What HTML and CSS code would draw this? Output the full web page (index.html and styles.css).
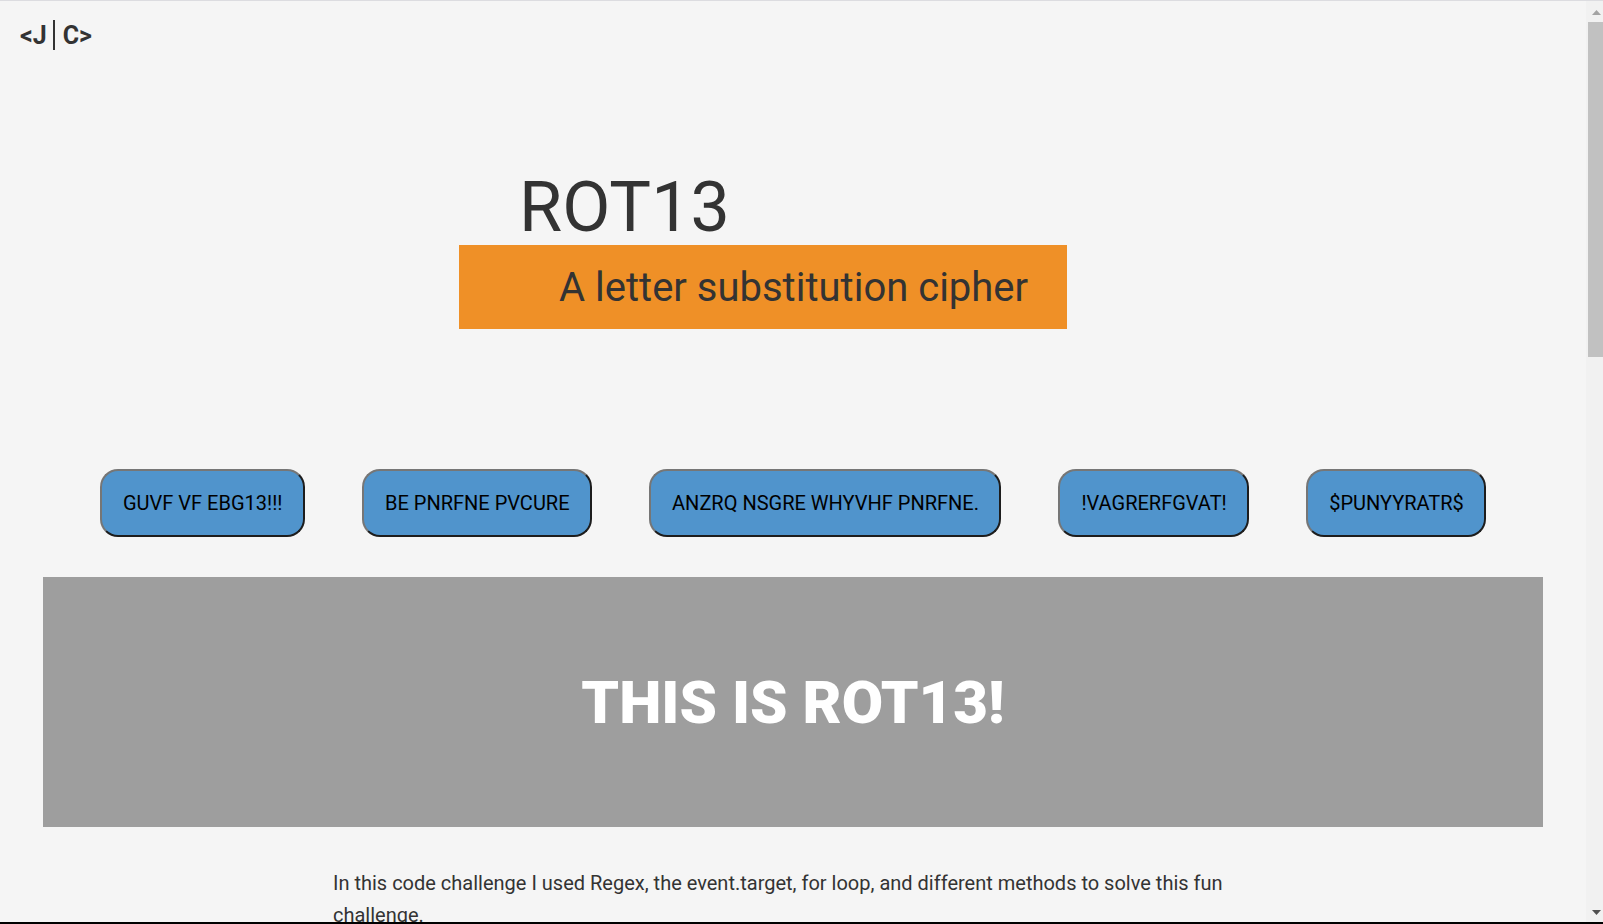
FILE: index.html
```html
<!DOCTYPE html>
<html lang="en">
<head>
    <meta charset="UTF-8">
    <meta name="viewport" content="width=device-width, initial-scale=1.0">
    <title>ROT13</title>
    <link rel="stylesheet" href="styles.css">
</head>
<body>
    <div class="window">
        <div class="page">
            <nav class="logo">
                <span>&lt;J</span>
                <span class="logo-bar"></span>
                <span>C&gt;</span>
            </nav>
            <header class="hero">
                <h1>ROT13</h1>
                <h2>A letter substitution cipher</h2>
            </header>
            <div class="buttons">
                <button>GUVF VF EBG13!!!</button>
                <button>BE PNRFNE PVCURE</button>
                <button>ANZRQ NSGRE WHYVHF PNRFNE.</button>
                <button>!VAGRERFGVAT!</button>
                <button>$PUNYYRATR$</button>
            </div>
            <div class="output">THIS IS ROT13!</div>
            <p class="about">In this code challenge I used Regex, the event.target, for loop, and different methods to solve this fun challenge.</p>
        </div>
        <div class="scrollbar">
            <svg class="arrow" width="17" height="17" viewBox="0 0 17 17"><path d="M6 14h9l-4.500-5z" fill="#a3a3a3"/></svg>
            <div class="track"><div class="thumb"></div></div>
            <svg class="arrow" width="17" height="17" viewBox="0 0 17 17"><path d="M6 5h9l-4.500 5z" fill="#505050"/></svg>
        </div>
    </div>
</body>
</html>
```

FILE: styles.css
```css
* {
    box-sizing: border-box;
}

body {
    margin: 0;
    height: 924px;
    overflow: hidden;
    background-color: #f5f5f5;
    color: #333;
    font-family: Roboto, sans-serif;
}

.window {
    display: flex;
    height: 924px;
    border-top: 1px solid #dcdce0;
    border-bottom: 2px solid #000;
}

.page {
    flex: 1;
    min-width: 0;
    overflow: hidden;
}

.logo {
    display: flex;
    align-items: center;
    height: 30px;
    margin: 19px 0 0 20px;
    font-size: 25px;
    font-weight: 700;
}

.logo-bar {
    width: 2px;
    height: 30px;
    margin: 0 8px 0 6px;
    background-color: #333;
}

.hero {
    margin: 116px 0 0 459px;
}

h1 {
    height: 79px;
    margin: 0 0 0 60px;
    font-size: 70px;
    font-weight: 400;
    line-height: 82px;
}

h2 {
    width: 608px;
    height: 84px;
    margin: 0;
    padding: 2px 0 0 100px;
    background-color: #ef9027;
    font-size: 40px;
    font-weight: 400;
    line-height: 82px;
}

.buttons {
    display: flex;
    gap: 57px;
    margin: 140px 0 0 100px;
}

button {
    height: 68px;
    padding: 0 20.500px 0 21px;
    border: 2px solid;
    border-color: #767676 #1d1d1d #1d1d1d #767676;
    border-radius: 18px;
    background-color: #5094cc;
    color: #000;
    font-family: Roboto, sans-serif;
    font-size: 20px;
    white-space: nowrap;
}

.output {
    width: 1500px;
    height: 250px;
    margin: 40px 0 0 43px;
    background-color: #9e9e9e;
    color: #fff;
    font-size: 60px;
    font-weight: 900;
    line-height: 252px;
    text-align: center;
}

.about {
    width: 900px;
    margin: 40px 0 0 333px;
    font-size: 20px;
    line-height: 32px;
}

.scrollbar {
    display: flex;
    flex: none;
    flex-direction: column;
    width: 17px;
    background-color: #f1f1f1;
}

.arrow {
    display: block;
    flex: none;
}

.track {
    flex: 1;
    padding: 4px 0 0 2px;
}

.thumb {
    height: 335px;
    background-color: #c1c1c1;
}
```
